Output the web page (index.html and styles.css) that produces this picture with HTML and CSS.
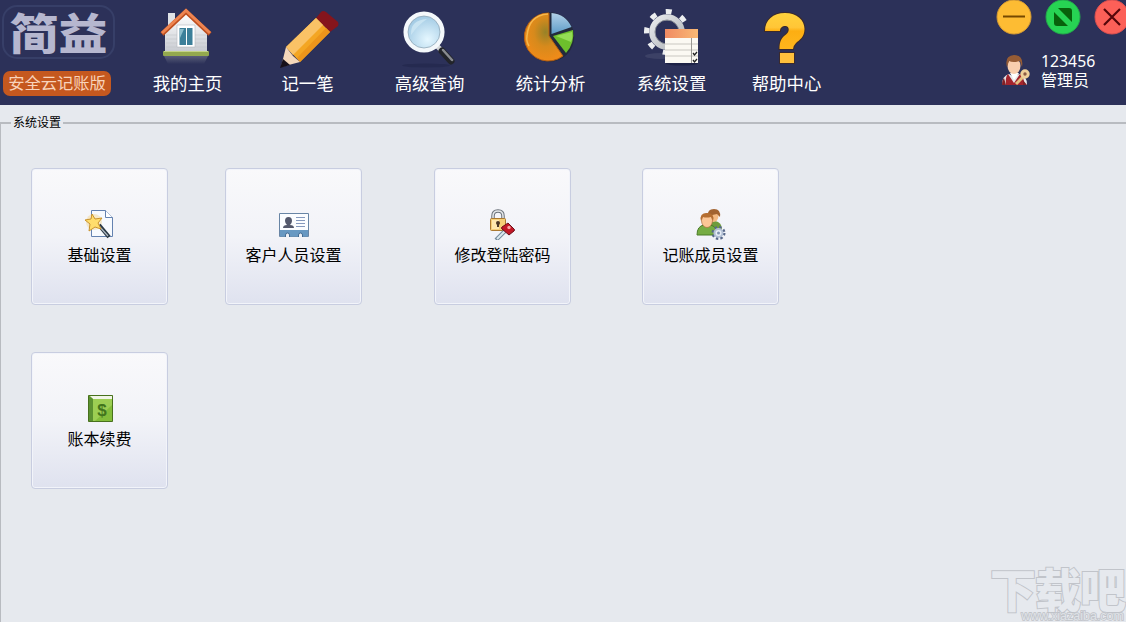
FILE: index.html
```html
<!DOCTYPE html>
<html lang="zh-CN">
<head>
  <meta charset="UTF-8">
  <meta name="viewport" content="width=device-width, initial-scale=1.0">
  <title>简益 安全云记账版</title>
  <link rel="stylesheet" href="styles.css">
</head>
<body>
  <header class="header">
    <div class="brand">
      <div class="brand-name"><span>简益</span></div>
      <div class="brand-tag">安全云记账版</div>
    </div>

    <nav class="nav">
      <a class="nav-item">
        <svg width="70" height="70" viewBox="0 0 70 70">
          <defs>
            <linearGradient id="wall" x1="0" y1="0" x2="0" y2="1"><stop offset="0" stop-color="#fff"/><stop offset="1" stop-color="#c9ccd2"/></linearGradient>
            <linearGradient id="shade" x1="0" y1="0" x2="0" y2="1"><stop offset="0" stop-color="#777b8d"/><stop offset="1" stop-color="#2c3159"/></linearGradient>
          </defs>
          <path d="M12 56h44l-4 8H16z" fill="url(#shade)" opacity=".6"/>
          <path d="M16 13h7v12h-7z" fill="#dfe2e6"/>
          <path d="M13 32 34 13l21 19v19H13z" fill="url(#wall)"/>
          <path d="M14 35h41M14 39h41M14 43h41M14 47h41" stroke="#c3c6cb" stroke-width=".6"/>
          <rect x="11" y="51" width="46" height="5" rx="1" fill="#93a94e"/>
          <path d="M12 51.5h44" stroke="#c4d587"/>
          <path d="M25 25h18v22H25z" fill="#fff" stroke="#b6bac0" stroke-width=".6"/>
          <path d="M27.500 28h6.500v17h-6.500zM35 28h5.500v17H35z" fill="#3c7f99"/>
          <path d="m28 29 4 0-4 9z" fill="#8bbccb"/>
          <path d="M10 34 34 11.500 58 34" fill="none" stroke="#bf4f1f" stroke-width="4.500"/>
          <path d="M10 33 34 10.500 58 33" fill="none" stroke="#ee8551" stroke-width="3"/>
        </svg>
        <span>我的主页</span>
      </a>
      <a class="nav-item">
        <svg width="70" height="70" viewBox="0 0 70 70">
          <path d="m44 18 5-6q2-2 5 0l12 10q1 2 0 4l-8 6z" fill="#85151c"/>
          <path d="m44 18 14 14-30 30-14-15z" fill="#f4a623"/>
          <path d="m44 18 7 7-30 30-7-8z" fill="#fac266"/>
          <path d="m54 28 4 4-30 30-3-4z" fill="#ec951b"/>
          <path d="M14 47 9 67l19-5-7-6z" fill="#f5d8bb"/>
          <path d="m11 59-3 9 10-3z" fill="#17101a"/>
        </svg>
        <span>记一笔</span>
      </a>
      <a class="nav-item">
        <svg width="70" height="70" viewBox="0 0 70 70">
          <defs><radialGradient id="lens" cx=".6" cy=".7" r=".8"><stop offset="0" stop-color="#e5f7ff"/><stop offset="1" stop-color="#91bfdd"/></radialGradient></defs>
          <ellipse cx="32" cy="65.500" rx="24" ry="2" fill="#1c2044" opacity=".4"/>
          <path d="m43 46 5 5" stroke="#d4d6d8" stroke-width="5"/>
          <path d="m48 51 9 10" stroke="#22242a" stroke-width="7" stroke-linecap="round"/>
          <path d="m49 50 9 10" stroke="#888b90" stroke-width="2.500" stroke-linecap="round"/>
          <circle cx="30" cy="32" r="18.300" fill="url(#lens)" stroke="#f4f8fb" stroke-width="4.500"/>
          <circle cx="30" cy="32" r="16" fill="none" stroke="#92a8b8" stroke-width=".8"/>
          <path d="M17 35q-1-15 16-16-9 6-16 16" fill="#c9e4f2"/>
        </svg>
        <span>高级查询</span>
      </a>
      <a class="nav-item">
        <svg width="70" height="70" viewBox="0 0 70 70">
          <defs>
            <radialGradient id="pie" cx=".55" cy=".4" r=".6"><stop offset="0" stop-color="#978227"/><stop offset=".5" stop-color="#d78a1c"/><stop offset="1" stop-color="#ef8b19"/></radialGradient>
            <linearGradient id="pieblue" x1="0" y1="0" x2="0" y2="1"><stop offset="0" stop-color="#b2d1e8"/><stop offset="1" stop-color="#5d9bc7"/></linearGradient>
          </defs>
          <circle cx="34.500" cy="37" r="24.700" fill="#232a3c"/>
          <path d="M34 36V13a24 24 0 1 0 14 43z" fill="url(#pie)" stroke="#b75f12"/>
          <path d="M36.500 34V13q14 1 20 14z" fill="url(#pieblue)"/>
          <path d="m38 36 20-6q2 13-7 23z" fill="#6dbf2c"/>
          <path d="m41 36 16-4q1 6-1 10z" fill="#94dc55"/>
          <path d="M33 14Q14 15 12 36q-1 5 2 10" fill="none" stroke="#f7b84c" stroke-width="1.500"/>
        </svg>
        <span>统计分析</span>
      </a>
      <a class="nav-item">
        <svg width="70" height="70" viewBox="0 0 70 70">
          <defs>
            <linearGradient id="gear" x1="0" y1="0" x2="1" y2="1"><stop offset="0" stop-color="#e9ebed"/><stop offset="1" stop-color="#aeb2b7"/></linearGradient>
            <linearGradient id="sheet" x1="0" y1="0" x2="1" y2="0"><stop offset="0" stop-color="#f08a62"/><stop offset="1" stop-color="#f9b975"/></linearGradient>
          </defs>
          <ellipse cx="24" cy="56" rx="15" ry="3" fill="#565b7b" opacity=".4"/>
          <ellipse cx="46" cy="63.500" rx="16" ry="2" fill="#1d2246"/>
          <circle cx="31" cy="32" r="20.500" fill="none" stroke="#eceef0" stroke-width="5" stroke-dasharray="6 10.101" stroke-dashoffset="1.900"/>
          <circle cx="31" cy="32" r="14.800" fill="none" stroke="url(#gear)" stroke-width="6"/>
          <circle cx="31" cy="32" r="12" fill="none" stroke="#868a93" stroke-width="1"/>
          <path d="M29 29h33v34H29z" fill="#fbf9f3"/>
          <path d="M29 29h33v9H29z" fill="url(#sheet)"/>
          <path d="M29 44h33M29 50h33M29 56h33" stroke="#c9c7c1"/>
          <path d="M55.500 38v25" stroke="#9a9894"/>
          <path d="m57 53 1.500 2 2.500-3M57 60l1.500 2 2.500-3" fill="none" stroke="#222" stroke-width="1.300"/>
        </svg>
        <span>系统设置</span>
      </a>
      <a class="nav-item">
        <svg width="70" height="70" viewBox="0 0 70 70">
          <defs><linearGradient id="help" x1="0" y1="0" x2="0" y2="1"><stop offset="0" stop-color="#ffd23c"/><stop offset=".4" stop-color="#ffc637"/><stop offset=".5" stop-color="#fdae12"/><stop offset="1" stop-color="#ffb61c"/></linearGradient></defs>
          <g fill="url(#help)" stroke="#3b2a2c" stroke-width="2" paint-order="stroke">
            <path d="M14 31c0-11 8-18 20-18s19.500 7 19.500 16c0 8-5 11-8.500 14q-3 3-3 6H28.500c0-8 2-11 6.500-14.500 4-3 3.500-8.500-.5-8.500-3.500 0-5.500 2-5.500 5z"/>
            <path d="M29 53h14v10H29z" fill="#ffc03c"/>
          </g>
        </svg>
        <span>帮助中心</span>
      </a>
    </nav>

    <div class="side">
      <div class="window-buttons">
        <svg width="36" height="36" viewBox="0 0 36 36"><circle cx="18" cy="17" r="17" fill="#fdbc33" stroke="#d79b32"/><path d="M7 16.500h22" stroke="#744800" stroke-width="2"/></svg>
        <svg width="36" height="36" viewBox="0 0 36 36"><circle cx="18" cy="17" r="17" fill="#27d353" stroke="#23aa4b"/><path d="M13 8h11q3 0 3 3v11zM9 12l14 14H12q-3 0-3-3z" fill="#08610b"/></svg>
        <svg width="36" height="36" viewBox="0 0 36 36"><circle cx="18" cy="17" r="17" fill="#fc6058" stroke="#da504f"/><path d="m10 9 16 16M26 9l-16 16" stroke="#55060a" stroke-width="2.200"/></svg>
      </div>
      <div class="user">
        <svg width="30" height="34" viewBox="0 0 30 34">
          <path d="M1 32q0-9 7-11l5 3 5-3q8 1 8 11z" fill="#e9e7e9"/>
          <path d="m7 21 6 9 6-9q4 1 4 11H5q-1-8 2-11" fill="#a3242d"/>
          <path d="m9 20 4 7 5-7z" fill="#fff"/>
          <path d="M1 32q0-5 2-7l2 7zM22 32v-5l4 5z" fill="#812025"/>
          <ellipse cx="13" cy="13" rx="6.500" ry="8" fill="#f8ceae"/>
          <path d="M6 14Q3 3 13 2q10 0 8 12l-2-6q-7 2-11 0z" fill="#965c35"/>
          <path d="m22 24-7 7" stroke="#e4c080" stroke-width="3"/>
          <circle cx="24" cy="21" r="3.200" fill="#8c5c45" stroke="#efd09a" stroke-width="3"/>
        </svg>
        <div class="user-text">
          <div class="user-id">123456</div>
          <div class="user-role">管理员</div>
        </div>
      </div>
    </div>
  </header>

  <main>
    <fieldset class="panel">
      <legend>系统设置</legend>
      <div class="tiles">
        <button class="tile">
          <svg width="32" height="32" viewBox="0 0 32 32">
            <path d="M7.500 2.500h14l7 7v19h-21z" fill="#f7fafe" stroke="#6482b0"/>
            <path d="M21.500 2.500v7h7" fill="#fff" stroke="#6482b0"/>
            <circle cx="10" cy="14" r="8" fill="#f2c96b" opacity=".35"/>
            <path d="m15 17 10 12" stroke="#293743" stroke-width="4"/>
            <path d="m15 18 9 10" stroke="#b1bac4" stroke-width="1.200"/>
            <path d="m8 6 3 5 7-1-4 5 3 6-6-2-6 4 1-7-5-4 6-1z" fill="#ffdd6c" stroke="#c9922c"/>
          </svg>
          <span>基础设置</span>
        </button>
        <button class="tile">
          <svg width="32" height="32" viewBox="0 0 32 32">
            <path d="M1.500 5.500h29v23h-29z" fill="#fbfdff" stroke="#6885a5"/>
            <path d="M2 22h28v6.500H2z" fill="#6798c2"/>
            <path d="M7.500 29v-2a2 2 0 0 1 4 0v2M20.500 29v-2a2 2 0 0 1 4 0v2" fill="#eef1f7" stroke="#426b93"/>
            <path d="M5 20q0-3 4-3-2-2-2-4 0-4 3.500-4t3.500 4q0 2-2 4 4 0 4 3z" fill="#53586c"/>
            <path d="M18 9.500h9M18 12.500h9M18 15.500h9M18 18.500h9" stroke="#8599bd"/>
          </svg>
          <span>客户人员设置</span>
        </button>
        <button class="tile">
          <svg width="32" height="32" viewBox="0 0 32 32">
            <path d="M6 12V8q0-5 5-5t5 5v4" fill="none" stroke="#697078" stroke-width="3.500"/>
            <path d="M6 12V8q0-5 5-5t5 5v4" fill="none" stroke="#e6e9eb" stroke-width="1.500"/>
            <rect x="3.500" y="10.500" width="15" height="12" rx="1" fill="#f6cf77" stroke="#ab7930"/>
            <path d="M5 12h7v9H5z" fill="#ffe8ad"/>
            <circle cx="11" cy="15" r="2" fill="#4d3825"/><path d="M11 15v4" stroke="#4d3825" stroke-width="2"/>
            <path d="m18 23-9 9" stroke="#758b9b" stroke-width="4"/>
            <path d="m18 23-8 8" stroke="#dce9ef" stroke-width="2"/>
            <path d="m21 15 6 6q1 1 0 2l-5 4-7-6q-1-1 0-2z" fill="#c31827" stroke="#6d0e18"/>
            <circle cx="22" cy="19.500" r="1.700" fill="#f7a3a3"/>
          </svg>
          <span>修改登陆密码</span>
        </button>
        <button class="tile">
          <svg width="32" height="32" viewBox="0 0 32 32">
            <path d="M13 20q1-7 7-7 7 1 7 9z" fill="#6e9c3d"/>
            <ellipse cx="18.500" cy="8" rx="5" ry="6" fill="#f4ba83"/>
            <path d="M13 8q-1-7 6-7t6 8l-3-3q-5 1-9 2z" fill="#a26330"/>
            <path d="M2 27q0-9 7-10h6q7 1 7 10z" fill="#76ac43" stroke="#4b7d29"/>
            <ellipse cx="12" cy="12.500" rx="5.500" ry="7" fill="#fbc696" stroke="#ae6c3d" stroke-width=".7"/>
            <path d="M6 13Q4 5 12 5q8 0 6 8l-2-4q-5 1-8 0z" fill="#b56e31"/>
            <circle cx="23.500" cy="25" r="5.500" fill="none" stroke="#59698a" stroke-width="3" stroke-dasharray="2.300 2.020"/>
            <circle cx="23.500" cy="25" r="4" fill="#e7edf6" stroke="#b4c1d5" stroke-width="2"/>
            <circle cx="23.500" cy="25" r="1.500" fill="#8294b1"/>
          </svg>
          <span>记账成员设置</span>
        </button>
        <button class="tile">
          <svg width="32" height="32" viewBox="0 0 32 32">
            <path d="M4.500 3.500h24v26h-24z" fill="#7eb238" stroke="#48711d"/>
            <path d="m6 4 3 3h19V4z" fill="#f1f5e6"/>
            <path d="M5 4l4 3v22H5z" fill="#5b9131"/>
            <path d="M9 7h19v22H9z" fill="#9cce53"/><path d="m28 13-17 16h17z" fill="#83bd3b"/>
            <text class="dollar" x="18" y="24" text-anchor="middle">$</text>
          </svg>
          <span>账本续费</span>
        </button>
      </div>
    </fieldset>
  </main>

  <div class="watermark">
    <div class="watermark-name">下载吧</div>
    <div class="watermark-url">www.xiazaiba.com</div>
  </div>
</body>
</html>
```
FILE: styles.css
```css
* {
  box-sizing: border-box;
}

body {
  margin: 0;
  height: 100vh;
  display: flex;
  flex-direction: column;
  overflow: hidden;
  background: #e6e9ee;
  font-family: "Liberation Sans", "Noto Sans CJK SC", sans-serif;
}

svg {
  display: block;
  flex: none;
}

.header {
  height: 105px;
  flex: none;
  display: flex;
  overflow: hidden;
  background: #2c3159;
  color: #fff;
}

/* logo */
.brand {
  width: 152px;
  flex: none;
  padding: 5px 0 0 2px;
}

.brand-name {
  width: 113px;
  height: 54px;
  border: 2px solid #373f68;
  border-radius: 15px;
  display: flex;
  align-items: center;
  justify-content: center;
  font-family: "Noto Sans CJK SC", sans-serif;
  font-size: 49px;
  font-weight: 900;
  line-height: 50px;
  color: #b6b7cf;
}

.brand-name span {
  transform: scaleY(0.88);
}

.brand-tag {
  width: 108px;
  height: 25px;
  margin: 12px 0 0 1px;
  border-radius: 7px;
  background: #c5581f;
  color: #f8d3bb;
  font-size: 16.3px;
  line-height: 24px;
  text-align: center;
  white-space: nowrap;
}

/* top menu */
.nav {
  display: grid;
  grid-template-columns: 120px 122px 121px 121px 115px 70px;
}

.nav-item {
  width: 71px;
  font-size: 17.4px;
  line-height: 28px;
  text-align: center;
  white-space: nowrap;
}

.side {
  margin-left: 175px;
  flex: none;
}

.window-buttons {
  display: flex;
  gap: 13px;
}

.user {
  display: flex;
  margin: 17px 0 0 5px;
}

.user-text {
  margin-left: 10px;
}

.user-id {
  font-family: "Noto Sans", sans-serif;
  font-size: 15.8px;
  line-height: 17px;
}

.user-role {
  font-size: 16px;
  line-height: 21px;
}

/* settings page */
main {
  flex: 1;
  padding-top: 9px;
}

.panel {
  height: 520px;
  min-width: 0;
  margin: 0;
  padding: 0;
  border: solid #b8bbc0;
  border-width: 2px 0 0 1px;
}

.panel legend {
  margin-left: 10px;
  padding: 1px 2px 0;
  font-size: 12px;
  line-height: 16px;
  color: #000;
}

.tiles {
  display: grid;
  grid-template-columns: 194px 209px 208px 137px;
  row-gap: 47px;
  padding: 37px 0 0 30px;
}

.tile {
  width: 137px;
  height: 137px;
  padding: 6px 0 0;
  display: flex;
  flex-direction: column;
  align-items: center;
  justify-content: center;
  border: 1px solid #c8cde0;
  border-radius: 4px;
  box-shadow: inset 0 0 0 1px #f2f4fa;
  background: linear-gradient(#f9f9fb, #f2f3f8 50%, #dfe2ef);
  font-family: inherit;
  font-size: 16px;
  line-height: 31px;
  color: #000;
  white-space: nowrap;
}

.dollar {
  font-size: 17px;
  font-weight: bold;
  fill: #42751d;
}

/* site mark over the bottom right corner */
.watermark {
  position: absolute;
  right: 2px;
  bottom: 0;
  width: 134px;
  text-align: right;
  color: #e6e9ee;
  white-space: nowrap;
}

.watermark-name {
  font-family: "Noto Sans CJK SC", sans-serif;
  font-size: 46px;
  font-weight: 900;
  line-height: 46px;
  letter-spacing: -1px;
  -webkit-text-stroke: 2px #c1c4ca;
  paint-order: stroke fill;
}

.watermark-url {
  font-size: 12.5px;
  line-height: 12px;
  color: #dfe2e7;
  -webkit-text-stroke: 1.5px #bfc2c8;
  paint-order: stroke fill;
}
```
